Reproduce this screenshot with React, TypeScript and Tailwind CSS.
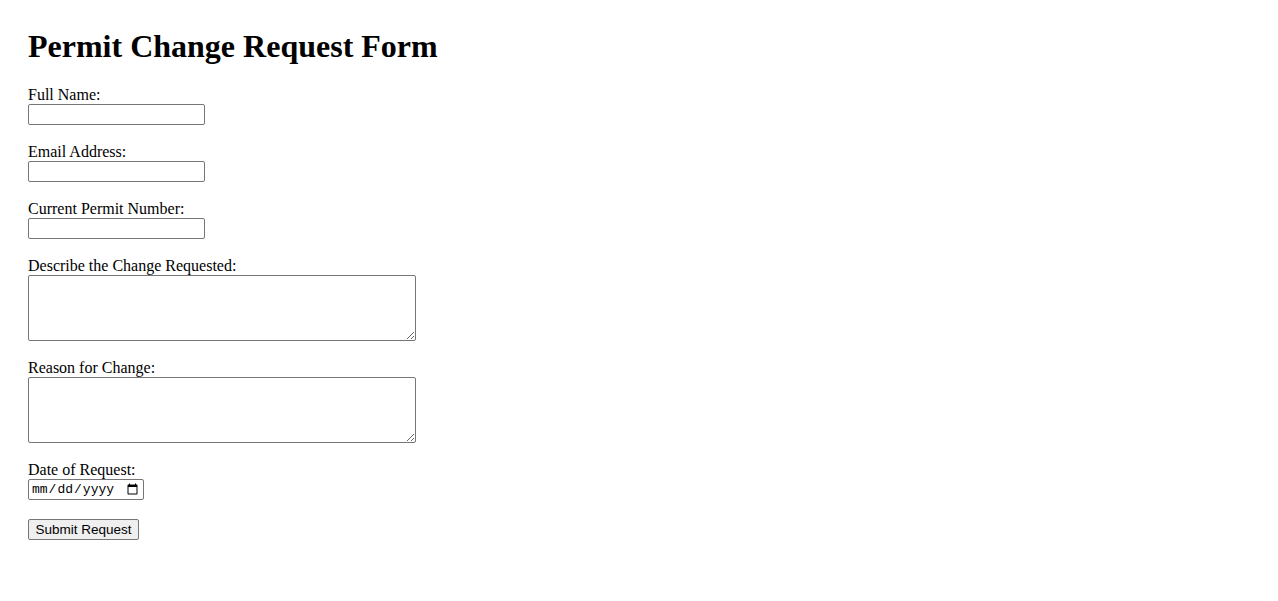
const fields = [
  { id: 'fullName', label: 'Full Name:', kind: 'text' },
  { id: 'email', label: 'Email Address:', kind: 'email' },
  { id: 'permit', label: 'Current Permit Number:', kind: 'text' },
  { id: 'change', label: 'Describe the Change Requested:', kind: 'area' },
  { id: 'reason', label: 'Reason for Change:', kind: 'area' },
  { id: 'date', label: 'Date of Request:', kind: 'date' },
];

const App = () => {
  return (
    <div className="min-h-screen bg-white p-[28px] font-['Liberation_Serif',serif] text-[16px] text-black">
      <h1 className="mb-[21px] text-[32px] font-bold leading-[37px]">Permit Change Request Form</h1>
      <form onSubmit={(event) => event.preventDefault()} className="flex flex-col gap-[18px]">
        {fields.map((field) => (
          <div key={field.id} className="flex flex-col items-start">
            <label htmlFor={field.id} className="block h-[18px] leading-[18px]">
              {field.label}
            </label>
            {field.kind === 'area' ? (
              <textarea
                id={field.id}
                className="block h-[66px] w-[388px] rounded-[2px] border border-[#767676] bg-white px-[2px] font-['Liberation_Mono',monospace] text-[13px]"
              />
            ) : field.kind === 'date' ? (
              <input
                id={field.id}
                type="date"
                className="block h-[21px] w-[116px] rounded-[2px] border border-[#767676] bg-white px-[2px] font-['Liberation_Mono',monospace] text-[13px] leading-[17px]"
              />
            ) : (
              <input
                id={field.id}
                type={field.kind}
                className="block h-[21px] w-[177px] rounded-[2px] border border-[#767676] bg-white px-[2px] font-['Liberation_Sans',sans-serif] text-[13px]"
              />
            )}
          </div>
        ))}
        <div className="-mt-px">
          <button
            type="submit"
            className="h-[21px] w-[111px] whitespace-nowrap rounded-[2px] border border-[#767676] bg-[#efefef] px-[4px] font-['Liberation_Sans',Arial,sans-serif] text-[13.5px] leading-[17px] text-black"
          >
            Submit Request
          </button>
        </div>
      </form>
    </div>
  );
};

export default App;
